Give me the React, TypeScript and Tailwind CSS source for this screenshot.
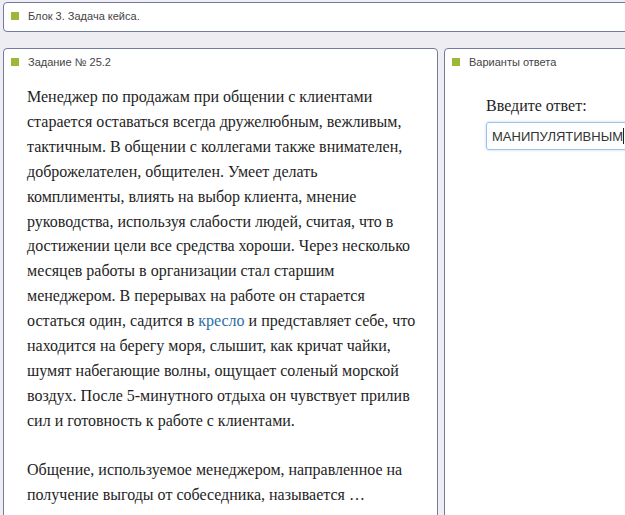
import React from "react";

const lines1 = [
  "Менеджер по продажам при общении с клиентами",
  "старается оставаться всегда дружелюбным, вежливым,",
  "тактичным. В общении с коллегами также внимателен,",
  "доброжелателен, общителен. Умеет делать",
  "комплименты, влиять на выбор клиента, мнение",
  "руководства, используя слабости людей, считая, что в",
  "достижении цели все средства хороши. Через несколько",
  "месяцев работы в организации стал старшим",
  "менеджером. В перерывах на работе он старается",
  "LINK",
  "находится на берегу моря, слышит, как кричат чайки,",
  "шумят набегающие волны, ощущает соленый морской",
  "воздух. После 5-минутного отдыха он чувствует прилив",
  "сил и готовность к работе с клиентами.",
];

const lines2 = [
  "Общение, используемое менеджером, направленное на",
  "получение выгоды от собеседника, называется …",
];

function Header({ title }: { title: string }) {
  return (
    <div className="flex items-center gap-[9px] h-[10px]">
      <span className="w-[8px] h-[8px] bg-[#9bb83a] shrink-0" />
      <span className="text-[11px] leading-none text-[#444]">{title}</span>
    </div>
  );
}

export default function App() {
  return (
    <div
      className="h-[515px] w-[625px] overflow-hidden bg-[#eeeef2] pt-[2px] pl-[3px]"
      style={{ fontFamily: '"Liberation Sans", Arial, sans-serif' }}
    >
      {/* Block header */}
      <div className="w-[640px] h-[30px] bg-white border border-[#737ba3] rounded-[4px] pl-[7px] pt-[8px]">
        <Header title="Блок 3. Задача кейса." />
      </div>

      <div className="flex gap-[6px] mt-[16px]">
        {/* Task */}
        <div className="w-[435px] h-[480px] shrink-0 bg-white border border-[#737ba3] rounded-[4px] pl-[7px] pt-[8px]">
          <Header title="Задание № 25.2" />
          <div
            className="mt-[18px] pl-[16px] text-[16px] leading-[24.9px] text-[#1e1e1e]"
            style={{ fontFamily: '"Liberation Serif", "Times New Roman", serif' }}
          >
            <p>
              {lines1.map((l, i) =>
                l === "LINK" ? (
                  <span key={i} className="block">
                    остаться один, садится в <span className="text-[#2a6ea6]">кресло</span> и представляет себе, что
                  </span>
                ) : (
                  <span key={i} className="block">
                    {l}
                  </span>
                )
              )}
            </p>
            <p className="mt-[24.5px]">
              {lines2.map((l, i) => (
                <span key={i} className="block">
                  {l}
                </span>
              ))}
            </p>
          </div>
        </div>

        {/* Answer */}
        <div className="w-[260px] h-[480px] shrink-0 bg-white border border-[#737ba3] rounded-[4px] pl-[7px] pt-[8px]">
          <Header title="Варианты ответа" />
          <div className="pl-[34px] mt-[29px]">
            <div
              className="text-[16px] leading-[20px] text-[#1e1e1e]"
              style={{ fontFamily: '"Liberation Serif", "Times New Roman", serif' }}
            >
              Введите ответ:
            </div>
            <div className="mt-[6px] h-[28px] w-[200px] border border-[#9cc3e6] rounded-[3px] shadow-[0_0_3px_rgba(110,160,220,0.45)] flex items-center pl-[5px]">
              <span className="text-[13px] text-[#333] leading-none">МАНИПУЛЯТИВНЫМ</span>
              <span className="w-[1px] h-[16px] bg-[#222]" />
            </div>
          </div>
        </div>
      </div>
    </div>
  );
}
